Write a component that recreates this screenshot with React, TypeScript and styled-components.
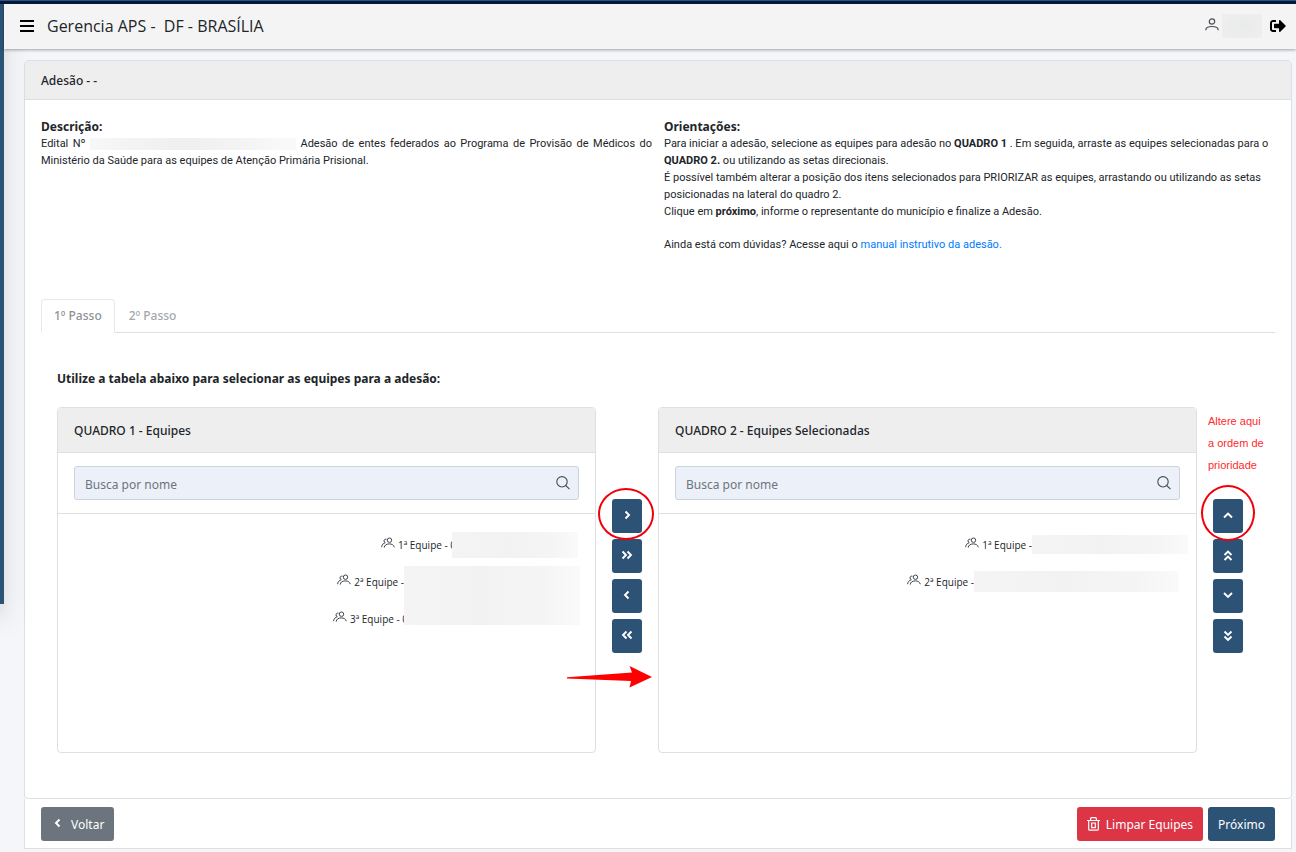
import React from "react";
import styled, { createGlobalStyle, css } from "styled-components";
import { FaSignOutAlt } from "react-icons/fa";

const GlobalStyle = createGlobalStyle`
  *, *::before, *::after { box-sizing: border-box; }
  body {
    margin: 0;
    background: #f4f6f9;
    color: #212529;
    font-family: "Noto Sans", "Open Sans", sans-serif;
    font-size: 12px;
    line-height: 18px;
  }
  button, input { font-family: inherit; }
`;

const Page = styled.div`
  position: relative;
  min-height: 100vh;
`;

const Strip = styled.div`
  height: 4px;
  border-top: 1px solid #3b5272;
  background: #021c41;
`;

const Sidebar = styled.aside`
  position: absolute;
  top: 4px;
  left: -246px;
  width: 250px;
  height: 600px;
  background: #2c5376;
  box-shadow: 0 14px 28px rgba(0, 0, 0, 0.1), 0 10px 10px rgba(0, 0, 0, 0.03);
  pointer-events: none;
`;

const TopBar = styled.header`
  position: relative;
  z-index: 1;
  display: flex;
  align-items: center;
  height: 45px;
  margin-left: 4px;
  padding: 0 10px 2px 16px;
  background: #f4f4f4;
  box-shadow: 0 1px 3px rgba(0, 0, 0, 0.35);
`;

const PlainButton = styled.button`
  display: flex;
  padding: 0;
  border: 0;
  background: none;
  color: #000;
`;

const Title = styled.h1`
  margin: 0 auto 0 13px;
  font-family: "Open Sans", sans-serif;
  font-size: 16px;
  font-weight: 400;
  white-space: pre;
`;

const UserName = styled.span`
  width: 40px;
  height: 24px;
  margin: 0 8px 0 3px;
  background: radial-gradient(#e9eaea, #efefef);
`;

const Main = styled.main`
  padding: 11px 4px 3px 24px;
`;

const Card = styled.section`
  border: 1px solid #dcdfe4;
  border-radius: 4px;
  background: #fff;
`;

const CardHeader = styled.h2`
  margin: 0;
  padding: 11px 16px 9px;
  border-bottom: 1px solid #dcdfe4;
  background: #eee;
  font-size: 12px;
  font-weight: 500;
`;

const CardBody = styled.div`
  padding: 19px 16px 45px;
`;

const Intro = styled.div`
  display: grid;
  grid-template-columns: 1fr 1fr;
  gap: 12px;
  min-height: 180px;
`;

const IntroTitle = styled.h3`
  margin: 0;
  font-size: 12px;
  line-height: 16px;
  font-weight: 700;
`;

const IntroText = styled.p<{ $justify?: boolean }>`
  margin: 0 0 16px;
  font-family: Roboto, "Open Sans", sans-serif;
  font-size: 11px;
  line-height: 17px;
  ${(p) => p.$justify && css`text-align: justify;`}
`;

const Link = styled.a`
  color: #007bff;
  text-decoration: none;
`;

const EditalNumber = styled.span`
  display: inline-block;
  width: 206px;
  height: 12px;
  vertical-align: middle;
  background: linear-gradient(90deg, #f7f7f7, #efefef 45%, #f4f4f4 75%, #fafafa);
`;

const Tabs = styled.nav`
  display: flex;
  gap: 1px;
  border-bottom: 1px solid #dcdfe4;
`;

const Tab = styled.button<{ $active?: boolean }>`
  height: 34px;
  margin-bottom: -1px;
  padding: 0 12px 2px;
  border: 1px solid transparent;
  border-radius: 4px 4px 0 0;
  background: none;
  color: #a3a7ab;
  font-size: 12px;
  font-weight: 500;
  ${(p) =>
    p.$active &&
    css`
      border-color: #e6e8ec #e6e8ec #fff;
      background: #fff;
      color: #8c9196;
    `}
`;

const Step = styled.div`
  padding: 37px 16px 0;
`;

const StepTitle = styled.h3`
  margin: 0 0 19px;
  font-size: 12px;
  font-weight: 700;
`;

const Boards = styled.div`
  display: grid;
  grid-template-columns: 1fr 62px 1fr 62px;
`;

const Board = styled.section`
  border: 1px solid #dcdfe4;
  border-radius: 4px;
`;

const BoardHeader = styled.h4`
  margin: 0;
  padding: 14px 16px 12px;
  border-bottom: 1px solid #dcdfe4;
  background: #eee;
  font-size: 12px;
  font-weight: 500;
`;

const SearchArea = styled.div`
  padding: 13px 16px;
  border-bottom: 1px solid #dcdfe4;
`;

const SearchField = styled.label`
  display: flex;
  align-items: center;
  height: 34px;
  padding: 0 8px 0 10px;
  border: 1px solid #ccd3da;
  border-radius: 3px;
  background: #ecf1f9;
`;

const SearchInput = styled.input`
  flex: 1;
  min-width: 0;
  padding: 2px 0 0;
  border: 0;
  outline: 0;
  background: none;
  font-size: 12px;
  &::placeholder { color: #6c757d; opacity: 1; }
`;

const TeamList = styled.ul`
  min-height: 238px;
  margin: 0;
  padding: 12px 0 0;
  list-style: none;
`;

const Team = styled.li<{ $end: number }>`
  display: flex;
  align-items: center;
  justify-content: flex-end;
  height: 37px;
  padding-right: ${(p) => p.$end}px;
  font-family: "Open Sans", sans-serif;
  font-size: 10px;
`;

const TeamName = styled.span`
  margin-left: 3px;
  white-space: nowrap;
`;

const Veil = styled.span<{ $width: number; $height: number; $side?: "start" | "end"; $overlap?: boolean }>`
  position: relative;
  width: ${(p) => p.$width}px;
  height: ${(p) => p.$height}px;
  margin-left: ${(p) => (p.$overlap ? "-4px" : "0")};
  align-self: ${(p) => (p.$side ? `flex-${p.$side}` : "center")};
  background: linear-gradient(90deg, #f4f4f4, #f2f2f2 45%, #f5f5f5 80%, #fafafa);
`;

const Controls = styled.div`
  display: flex;
  flex-direction: column;
  align-items: center;
  gap: 6px;
  position: relative;
  padding-top: 92px;
`;

const ControlButton = styled.button`
  display: flex;
  align-items: center;
  justify-content: center;
  width: 30px;
  height: 34px;
  padding: 0 0 2px;
  border: 0;
  border-radius: 3px;
  background: #2c5376;
  color: #fff;
`;

const Ring = styled.span<{ $round?: boolean }>`
  position: absolute;
  top: ${(p) => (p.$round ? 78 : 81)}px;
  left: ${(p) => (p.$round ? 4 : 2)}px;
  width: ${(p) => (p.$round ? 54 : 56)}px;
  height: ${(p) => (p.$round ? 56 : 52)}px;
  border: 2px solid #f00008;
  border-radius: 50%;
  pointer-events: none;
`;

const Arrow = styled.svg`
  position: absolute;
  top: 258px;
  left: -29px;
`;

const Note = styled.p`
  position: absolute;
  top: 3px;
  left: 11px;
  margin: 0;
  color: #ff2a2a;
  font-family: "Liberation Sans", Arial, sans-serif;
  font-size: 11px;
  line-height: 22px;
  white-space: nowrap;
`;

const Footer = styled.footer`
  display: flex;
  gap: 5px;
  padding: 8px 16px 7px;
  border: 1px solid #dcdfe4;
  border-top: 0;
  background: #fff;
`;

const Action = styled.button<{ $tone: string; $push?: boolean }>`
  display: flex;
  align-items: center;
  gap: 6px;
  height: 34px;
  margin-right: ${(p) => (p.$push ? "auto" : "0")};
  padding: 1px 10px 0;
  border: 0;
  border-radius: 3px;
  background: ${(p) => p.$tone};
  color: #fff;
  font-size: 12px;
`;

const MenuIcon = () => (
  <svg width="14" height="14" viewBox="0 0 14 14" aria-hidden="true">
    <path d="M0 2h14M0 7h14M0 12h14" stroke="#000" strokeWidth="2.2" />
  </svg>
);

const UserIcon = () => (
  <svg width="14" height="18" viewBox="0 0 14 18" fill="none" stroke="#4a4f55" strokeWidth="1.2" aria-hidden="true">
    <circle cx="7" cy="4.500" r="2.700" />
    <path d="M.9 13.200v-.6C.9 10.700 3 9.500 7 9.500s6.100 1.200 6.100 3.100v.6" />
  </svg>
);

const PeopleIcon = () => (
  <svg width="14" height="16" viewBox="0 0 14 16" fill="none" stroke="#3d444b" strokeWidth="1" aria-hidden="true">
    <circle cx="8.500" cy="3.200" r="2.200" />
    <path d="M3.200 10.600C3.500 8.200 5.300 6.900 8.300 6.900c2.600 0 4.500 1.100 5 3.300" />
    <path d="M5.500 2.200C4.100 1.800 3 2.600 3 3.900c0 .9.500 1.500 1.300 1.800C2.200 6.300.9 7.700.6 10.200" />
  </svg>
);

const SearchIcon = () => (
  <svg width="14" height="14" viewBox="0 0 14 14" fill="none" stroke="#454c54" strokeWidth="1.100" aria-hidden="true">
    <circle cx="6" cy="5.800" r="5.200" />
    <path d="M9.700 9.500l3.800 3.600" />
  </svg>
);

const TrashIcon = () => (
  <svg width="13" height="16" viewBox="0 0 13 16" fill="none" stroke="#fff" strokeWidth="1.200" aria-hidden="true">
    <path d="M0 3.500h13M3.600 3.300V1.700c0-.6.400-1 1-1h3.800c.6 0 1 .4 1 1v1.600M1.700 3.500v8.700c0 .6.400 1 1 1h7.600c.6 0 1-.4 1-1V3.500M4.700 6v4.700h3.600V6z" />
  </svg>
);

const chevrons = {
  right: "M5.500 3.500L9 7l-3.500 3.500",
  rightAll: "M2.500 3.500L6 7l-3.500 3.500M7.500 3.500L11 7l-3.500 3.500",
  left: "M8.500 3.500L5 7l3.500 3.500",
  leftAll: "M6.500 3.500L3 7l3.500 3.500M11.500 3.500L8 7l3.500 3.500",
  up: "M3 9.500l4-4 4 4",
  upAll: "M3.500 7L7 3.500 10.500 7M3.500 12L7 8.500l3.500 3.500",
  down: "M3 5l4 4 4-4",
  downAll: "M3.500 3.500L7 7l3.500-3.500M3.500 8.500L7 12l3.500-3.500",
};

const Chevron = ({ kind, height = 14 }: { kind: keyof typeof chevrons; height?: number }) => (
  <svg width="14" height={height} viewBox={`0 0 14 ${height}`} fill="none" stroke="currentColor" strokeWidth="1.900" aria-hidden="true">
    <path d={chevrons[kind]} />
  </svg>
);

const Search = () => (
  <SearchArea>
    <SearchField>
      <SearchInput type="text" placeholder="Busca por nome" aria-label="Busca por nome" />
      <SearchIcon />
    </SearchField>
  </SearchArea>
);

export default function App() {
  return (
    <Page>
      <GlobalStyle />
      <Strip />
      <TopBar>
        <PlainButton aria-label="Menu"><MenuIcon /></PlainButton>
        <Title>{"Gerencia APS -  DF - BRASÍLIA"}</Title>
        <UserIcon />
        <UserName />
        <PlainButton aria-label="Sair"><FaSignOutAlt size={16} /></PlainButton>
      </TopBar>
      <Main>
        <Card>
          <CardHeader>Adesão - -</CardHeader>
          <CardBody>
            <Intro>
              <div>
                <IntroTitle>Descrição:</IntroTitle>
                <IntroText $justify>
                  Edital Nº <EditalNumber /> Adesão de entes federados ao Programa de Provisão de Médicos do
                  Ministério da Saúde para as equipes de Atenção Primária Prisional.
                </IntroText>
              </div>
              <div>
                <IntroTitle>Orientações:</IntroTitle>
                <IntroText>
                  Para iniciar a adesão, selecione as equipes para adesão no <b>QUADRO 1</b> . Em seguida, arraste as
                  equipes selecionadas para o <b>QUADRO 2.</b> ou utilizando as setas direcionais.
                  <br />
                  É possível também alterar a posição dos itens selecionados para PRIORIZAR as equipes, arrastando ou
                  utilizando as setas posicionadas na lateral do quadro 2.
                  <br />
                  Clique em <b>próximo</b>, informe o representante do município e finalize a Adesão.
                </IntroText>
                <IntroText>
                  Ainda está com dúvidas? Acesse aqui o <Link href="#manual">manual instrutivo da adesão.</Link>
                </IntroText>
              </div>
            </Intro>
            <Tabs>
              <Tab $active>1º Passo</Tab>
              <Tab>2º Passo</Tab>
            </Tabs>
            <Step>
              <StepTitle>Utilize a tabela abaixo para selecionar as equipes para a adesão:</StepTitle>
              <Boards>
                <Board>
                  <BoardHeader>QUADRO 1 - Equipes</BoardHeader>
                  <Search />
                  <TeamList>
                    <Team $end={17}>
                      <PeopleIcon />
                      <TeamName>1ª Equipe - 0</TeamName>
                      <Veil $width={126} $height={26} $overlap />
                    </Team>
                    <Team $end={15}>
                      <PeopleIcon />
                      <TeamName>2ª Equipe -</TeamName>
                      <Veil $width={176} $height={34} $side="end" />
                    </Team>
                    <Team $end={15}>
                      <PeopleIcon />
                      <TeamName>3ª Equipe - 0</TeamName>
                      <Veil $width={176} $height={25} $side="start" $overlap />
                    </Team>
                  </TeamList>
                </Board>
                <Controls>
                  <ControlButton aria-label="Adicionar"><Chevron kind="right" /></ControlButton>
                  <ControlButton aria-label="Adicionar todas"><Chevron kind="rightAll" /></ControlButton>
                  <ControlButton aria-label="Remover"><Chevron kind="left" /></ControlButton>
                  <ControlButton aria-label="Remover todas"><Chevron kind="leftAll" /></ControlButton>
                  <Ring />
                  <Arrow width="86" height="24" viewBox="0 0 86 24" aria-hidden="true">
                    <path d="M0 12.200v1.200L64 16l-1.500 6.500L85 12 62.500 1 65 7.500z" fill="#f00" />
                  </Arrow>
                </Controls>
                <Board>
                  <BoardHeader>QUADRO 2 - Equipes Selecionadas</BoardHeader>
                  <Search />
                  <TeamList>
                    <Team $end={8}>
                      <PeopleIcon />
                      <TeamName>1ª Equipe -</TeamName>
                      <Veil $width={156} $height={19} />
                    </Team>
                    <Team $end={17}>
                      <PeopleIcon />
                      <TeamName>2ª Equipe -</TeamName>
                      <Veil $width={205} $height={21} />
                    </Team>
                  </TeamList>
                </Board>
                <Controls>
                  <Note>Altere aqui<br />a ordem de<br />prioridade</Note>
                  <ControlButton aria-label="Subir"><Chevron kind="up" /></ControlButton>
                  <ControlButton aria-label="Mover para o topo"><Chevron kind="upAll" /></ControlButton>
                  <ControlButton aria-label="Descer"><Chevron kind="down" /></ControlButton>
                  <ControlButton aria-label="Mover para o fim"><Chevron kind="downAll" /></ControlButton>
                  <Ring $round />
                </Controls>
              </Boards>
            </Step>
          </CardBody>
        </Card>
        <Footer>
          <Action $tone="#6c757d" $push><Chevron kind="left" height={18} />Voltar</Action>
          <Action $tone="#dc3545"><TrashIcon />Limpar Equipes</Action>
          <Action $tone="#2c5376">Próximo</Action>
        </Footer>
      </Main>
      <Sidebar />
    </Page>
  );
}
